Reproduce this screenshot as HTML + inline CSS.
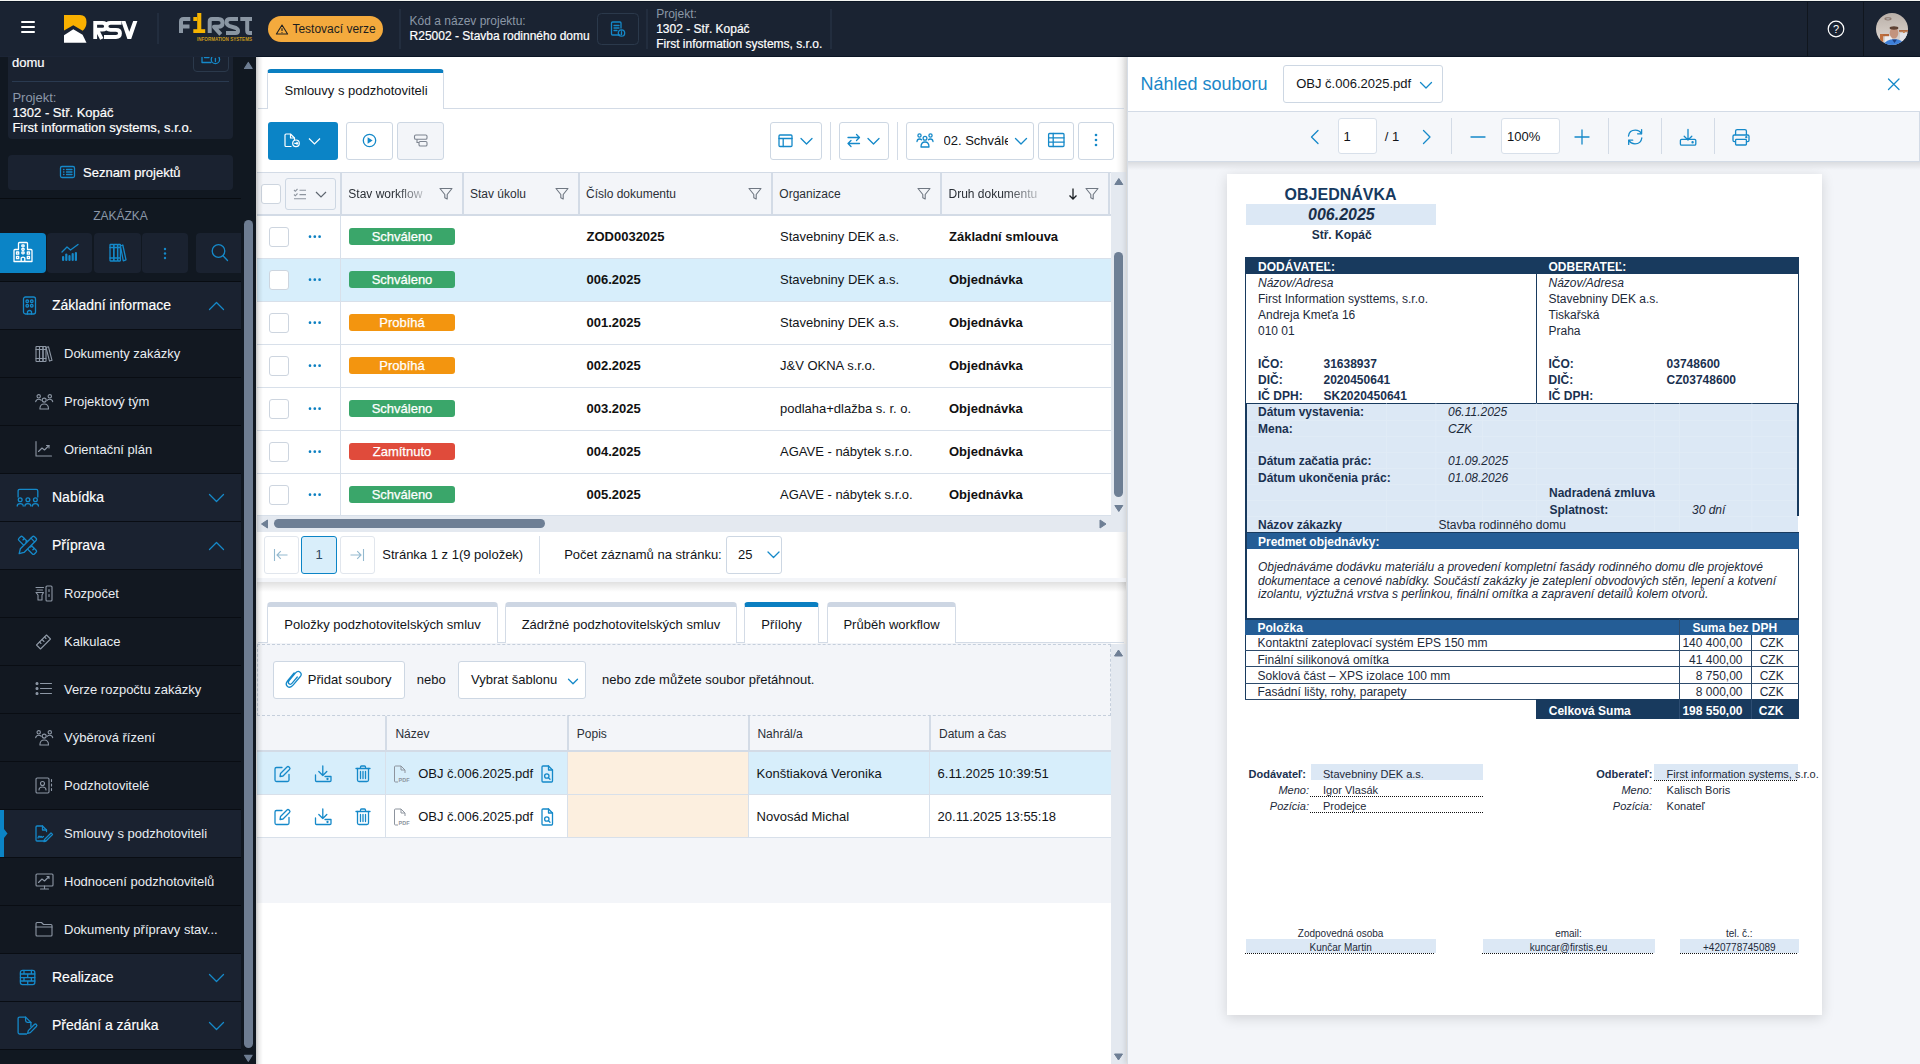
<!DOCTYPE html>
<html><head><meta charset="utf-8"><title>RSV</title>
<style>
*{box-sizing:border-box;margin:0;padding:0}
html,body{width:1920px;height:1064px;overflow:hidden;background:#fff;font-family:"Liberation Sans",sans-serif;color:#1b1f24}
.a{position:absolute}
svg{display:block;overflow:visible;position:absolute}
.t{position:absolute;white-space:nowrap;line-height:1}
#hdr{position:absolute;left:0;top:1px;width:1920px;height:55px;background:#1a2332}
.vsep{position:absolute;width:1px;background:#2b394b}
#sb{position:absolute;left:0;top:56px;width:256px;height:1008px;background:#111821;overflow:hidden}
.row{position:absolute;left:0;width:241px}
.sec{background:#1a2230}
.sub{background:#121821}
.rsep{position:absolute;left:0;width:241px;height:1px;background:#090d13}
.st{position:absolute;left:52px;color:#fff;font-size:14px;white-space:nowrap;line-height:1}
.subt{position:absolute;color:#e9edf2;font-size:13px;white-space:nowrap;line-height:1;left:64px}
.ic{stroke:#1589c9;fill:none;stroke-width:1.3;stroke-linecap:round;stroke-linejoin:round}
.icg{stroke:#8d97a5;fill:none;stroke-width:1.1;stroke-linecap:round;stroke-linejoin:round}
.btn{position:absolute;border:1px solid #cdd7e3;border-radius:3px;background:#fff}
.th{position:absolute;font-size:12px;color:#22272e;white-space:nowrap;line-height:1}
.cb{position:absolute;width:20px;height:20px;border:1px solid #cdd5df;border-radius:3px;background:#fff}
.badge{position:absolute;left:349px;width:106px;height:17px;border-radius:3px;color:#fff;font-size:13px;text-align:center;line-height:17px;-webkit-text-stroke:0.25px #fff}
.td{position:absolute;font-size:13px;color:#1b1f24;white-space:nowrap;line-height:1}
.b{font-weight:bold}
.pdf{position:absolute;color:#1b2a40;white-space:nowrap;line-height:1;font-size:12px}

</style></head><body>
<div class="a" style="left:0;top:0;width:1920px;height:1px;background:#f4f5f2"></div><div class="a" style="left:0;top:1px;width:1920px;height:1px;background:#0c1624;z-index:1"></div>
<div id="hdr"></div>
<div class="a" style="left:21px;top:21px;width:14px;height:2px;background:#fff;border-radius:1px"></div>
<div class="a" style="left:21px;top:26px;width:14px;height:2px;background:#fff;border-radius:1px"></div>
<div class="a" style="left:21px;top:31px;width:14px;height:2px;background:#fff;border-radius:1px"></div>
<svg style="left:0;top:0" width="1920" height="56">
  <path d="M64 15 H80 Q86.5 15 86.5 22 Q86.5 27.5 82.7 30.8 L73.3 25.2 L64 30.6 Z" fill="#f9b000"/>
  <path d="M64 35.2 L73.3 29.3 L82.6 34.7 L86.5 42.8 H64 Z" fill="#fff"/>
  <g stroke="#fff" stroke-width="3.8" fill="none" stroke-linejoin="miter">
    <path d="M95.2 39 V22.9 H102.5 Q106 22.9 106 26.3 Q106 29.7 102.5 29.7 H97 L101.8 39"/>
    <path d="M121.5 22.9 H110.5 Q106.5 22.9 106.5 26.3 Q106.5 29.8 110.5 29.8 H116 Q120 29.8 120 33.3 Q120 37 116 37 H104"/>
    
  </g>
  <path d="M121.2 21 H125.4 L129.3 31.8 L133.2 21 H137.4 L131.2 38.9 H127.4 Z" fill="#fff"/>
  <rect x="157.5" y="13" width="1" height="31" fill="#2b394b"/>
  <g stroke="#8a96a3" stroke-width="4" fill="none" stroke-linejoin="round">
    <path d="M181 33 V21.5 Q181 19 183.5 19 H190.3"/>
    <path d="M181 26.5 H189.5"/>
    <path d="M209.7 33 V21.5 Q209.7 19 212 19 H218.3 Q222.6 19 222.6 23 Q222.6 26.8 218.3 26.8 H214 L220.8 34.3"/>
    <path d="M238 19 H230.5 Q226.5 19 226.5 22.3 Q226.5 24.5 229 25.8 L236 28 Q238 29 238 31 Q238 33 235.5 33 H226"/>
    <path d="M240.3 19 H252 M247.2 19 V30.5 Q247.2 33 249.5 33 H252"/>
  </g>
  <g fill="#f5b301">
    <rect x="197.2" y="13" width="4.1" height="20"/>
    <rect x="193.3" y="17" width="3.9" height="4"/>
    <rect x="193.3" y="29.2" width="11.9" height="3.8"/>
  </g>
  <text x="197" y="41" font-family="Liberation Sans" font-weight="bold" font-size="5.2" fill="#c99a1c" textLength="55" lengthAdjust="spacingAndGlyphs">INFORMATION SYSTEMS</text>
  <rect x="268" y="16" width="115" height="26" rx="13" fill="#f4aa3d"/>
  <path d="M282 25 L287.6 34 H276.4 Z" stroke="#222" stroke-width="1.1" fill="none" stroke-linejoin="round"/>
  <path d="M282 28.2 V31" stroke="#222" stroke-width="1.1"/>
  <circle cx="282" cy="32.6" r="0.6" fill="#222"/>
  <rect x="399.5" y="9" width="1" height="40" fill="#2b394b"/>
  <rect x="597.5" y="13.5" width="41" height="31" rx="4" fill="none" stroke="#2b394b"/>
  <g class="ic" stroke-width="1.2">
    <path d="M620 35 H612.5 Q611.5 35 611.5 34 V23 Q611.5 22 612.5 22 H620 Q621 22 621 23 V28"/>
    <path d="M614 25.5 H619 M614 28 H619 M614 30.5 H617"/>
    <circle cx="621.5" cy="33" r="3.2"/>
    <path d="M621.5 32.3 V34.6 M621.5 31 V31.2"/>
  </g>
  <rect x="646.5" y="9" width="1" height="40" fill="#2b394b"/>
  <rect x="830.5" y="9" width="1" height="40" fill="#2b394b"/>
  <rect x="1807" y="1" width="1" height="55" fill="#10161e"/>
  <rect x="1863" y="1" width="1" height="55" fill="#10161e"/>
  <circle cx="1836" cy="29" r="7.8" fill="none" stroke="#fff" stroke-width="1.2"/>
  <text x="1836" y="33" font-family="Liberation Sans" font-size="11" fill="#fff" text-anchor="middle">?</text>
  <defs>
    <clipPath id="av"><circle cx="1892" cy="29" r="16"/></clipPath>
    <linearGradient id="avg" x1="0" y1="0" x2="0" y2="1"><stop offset="0" stop-color="#b8afa8"/><stop offset="0.5" stop-color="#cec5be"/><stop offset="1" stop-color="#dcd7d6"/></linearGradient>
  </defs>
  <g clip-path="url(#av)">
    <rect x="1876" y="13" width="32" height="32" fill="url(#avg)"/>
    <ellipse cx="1888" cy="18.8" rx="3.6" ry="1.7" fill="#8f7c72"/>
    <ellipse cx="1888" cy="18.8" rx="1.8" ry="1" fill="#a9a4a2"/>
    <rect x="1885" y="36" width="7" height="6" fill="#ecebee"/>
    <rect x="1880" y="34" width="9" height="2.2" fill="#b5673a"/>
    <rect x="1880" y="34" width="3.2" height="11" fill="#c0703f"/>
    <rect x="1899" y="30" width="10" height="1.8" fill="#b06a42"/>
    <rect x="1903" y="31" width="1.8" height="6" fill="#c88452"/>
    <rect x="1900" y="33" width="8" height="9" fill="#e3e1e6"/>
    <ellipse cx="1894" cy="33" rx="4.3" ry="5.6" fill="#c3937d"/>
    <ellipse cx="1894" cy="28" rx="4.4" ry="1.7" fill="#5e4234"/>
    <path d="M1883 46 Q1885 39.2 1894.5 39.2 Q1903 39.2 1906 46 Z" fill="#3d7fd8"/>
    <path d="M1892 39.5 L1894.5 43 L1897 39.5" fill="#1e3e80"/>
  </g>
</svg>
<div class="t" style="left:292.4px;top:22.6px;font-size:12px;color:#1d1d1d">Testovací verze</div>
<div class="t" style="left:409.6px;top:14.8px;font-size:12px;color:#8b97a6">Kód a název projektu:</div>
<div class="t" style="left:409.6px;top:29.8px;font-size:12px;color:#fff;-webkit-text-stroke:0.2px #fff">R25002 - Stavba rodinného domu</div>
<div class="t" style="left:656.2px;top:7.7px;font-size:12px;color:#8b97a6">Projekt:</div>
<div class="t" style="left:656.2px;top:22.8px;font-size:12px;color:#fff;-webkit-text-stroke:0.2px #fff">1302 - Stř. Kopáč</div>
<div class="t" style="left:656.2px;top:37.5px;font-size:12px;color:#fff;-webkit-text-stroke:0.2px #fff">First information systems, s.r.o.</div>
<div id="sb">
<div class="a" style="left:8px;top:-60px;width:225px;height:143px;background:#1a2230;border-radius:4px"></div>
<div class="t" style="left:12px;top:-0.2px;font-size:13px;color:#fff;-webkit-text-stroke:0.2px #fff">domu</div>
<div class="a" style="left:193px;top:-20px;width:36px;height:35.5px;border:1px solid #2b394b;border-radius:4px"></div>
<svg style="left:0;top:0" width="256" height="300"><g class="ic" stroke-width="1.3"><path d="M202 0 V6.5 H211"/><path d="M204.5 1.5 H209"/><circle cx="215.4" cy="3.4" r="4.2"/><path d="M215.4 2.5 V5.5"/></g></svg>
<div class="a" style="left:12px;top:25px;width:217px;height:1px;background:#2a3a50"></div>
<div class="t" style="left:12.4px;top:35px;font-size:13px;color:#8b97a8">Projekt:</div>
<div class="t" style="left:12.4px;top:50px;font-size:13px;color:#fff;-webkit-text-stroke:0.2px #fff">1302 - Stř. Kopáč</div>
<div class="t" style="left:12.4px;top:64.8px;font-size:13px;color:#fff;-webkit-text-stroke:0.2px #fff">First information systems, s.r.o.</div>
<div class="a" style="left:8px;top:99px;width:225px;height:35px;background:#1a2230;border-radius:4px"></div>
<svg style="left:0;top:0" width="256" height="300"><g class="ic" stroke-width="1.2"><rect x="60.5" y="110.5" width="14" height="11" rx="1.5"/><path d="M63.5 113.5 H64 M66.5 113.5 H72 M63.5 116 H64 M66.5 116 H72 M63.5 118.5 H64 M66.5 118.5 H72"/></g></svg>
<div class="t" style="left:83px;top:110px;font-size:13px;color:#fff;-webkit-text-stroke:0.2px #fff">Seznam projektů</div>
<div class="a" style="left:0;top:142px;width:241px;height:1px;background:#080c11"></div>
<div class="t" style="left:0;width:241px;text-align:center;top:153.8px;font-size:12px;color:#8b97a8">ZAKÁZKA</div>
<div class="a" style="left:0px;top:177px;width:46px;height:40px;background:#0b84c6;border-radius:0 4px 4px 0"></div>
<div class="a" style="left:47px;top:177px;width:45px;height:40px;background:#1a2230;border-radius:4px"></div>
<div class="a" style="left:94px;top:177px;width:47px;height:40px;background:#1a2230;border-radius:4px"></div>
<div class="a" style="left:142px;top:177px;width:46px;height:40px;background:#1a2230;border-radius:4px"></div>
<div class="a" style="left:196px;top:177px;width:45px;height:40px;background:#1a2230;border-radius:4px 0 0 4px"></div>
<svg style="left:0;top:0" width="256" height="300"><g stroke="#fff" stroke-width="1.3" fill="none" stroke-linejoin="round"><path d="M14 205.5 V194.5 Q14 193.5 15 193.5 H18.5 V187.5 Q18.5 186.5 19.5 186.5 H26.5 Q27.5 186.5 27.5 187.5 V193.5 H31 Q32 193.5 32 194.5 V205.5 Z"/><rect x="16.5" y="196" width="2.2" height="2.2"/><rect x="16.5" y="200.5" width="2.2" height="2.2"/><rect x="27.3" y="196" width="2.2" height="2.2"/><rect x="27.3" y="200.5" width="2.2" height="2.2"/><rect x="21.8" y="189" width="2.4" height="1.8" rx="0.8"/><rect x="21.8" y="192.5" width="2.4" height="1.8" rx="0.8"/><rect x="21.8" y="196" width="2.4" height="1.8" rx="0.8"/><path d="M21.2 205.5 V202 Q23 200.3 24.8 202 V205.5"/></g><g class="ic" stroke-width="1.3"><path d="M62 196 L67 191 L70.5 194 L78 188.5"/></g><g fill="#1589c9"><rect x="62" y="200" width="2.2" height="5" rx="1.1"/><rect x="65.2" y="197.5" width="2.2" height="7.5" rx="1.1"/><rect x="68.4" y="199" width="2.2" height="6" rx="1.1"/><rect x="71.6" y="197" width="2.2" height="8" rx="1.1"/><rect x="74.8" y="196" width="2.2" height="9" rx="1.1"/></g><g class="ic" stroke-width="1.2"><rect x="110" y="188.5" width="3.8" height="16.5" rx="0.5"/><rect x="113.8" y="188.5" width="3.8" height="16.5" rx="0.5"/><rect x="117.6" y="188.5" width="2.8" height="16.5" rx="0.5"/><path d="M120.4 190 L122.8 189 L126 203.8 L123.3 204.8 Z"/><path d="M110 191.5 H120.4 M110 202 H120.4"/></g><g fill="#1589c9"><circle cx="165" cy="193" r="1.2"/><circle cx="165" cy="197.5" r="1.2"/><circle cx="165" cy="202" r="1.2"/></g><g class="ic" stroke-width="1.4"><circle cx="218.5" cy="195" r="6.3"/><path d="M223 199.8 L227.5 204.5"/></g></svg>
<div class="a" style="left:0;top:225px;width:241px;height:1px;background:#080c11"></div>
<div class="row" style="top:226px;height:47px;background:#1a2230"></div>
<div class="rsep" style="top:273px"></div>
<div class="st" style="top:242.2px;-webkit-text-stroke:0.15px #fff">Základní informace</div>
<div class="row" style="top:274px;height:47px;background:#121821"></div>
<div class="rsep" style="top:321px"></div>
<div class="subt" style="top:291.3px">Dokumenty zakázky</div>
<div class="row" style="top:322px;height:47px;background:#121821"></div>
<div class="rsep" style="top:369px"></div>
<div class="subt" style="top:339.3px">Projektový tým</div>
<div class="row" style="top:370px;height:47px;background:#121821"></div>
<div class="rsep" style="top:417px"></div>
<div class="subt" style="top:387.3px">Orientační plán</div>
<div class="row" style="top:418px;height:47px;background:#1a2230"></div>
<div class="rsep" style="top:465px"></div>
<div class="st" style="top:434.2px;-webkit-text-stroke:0.15px #fff">Nabídka</div>
<div class="row" style="top:466px;height:47px;background:#1a2230"></div>
<div class="rsep" style="top:513px"></div>
<div class="st" style="top:482.2px;-webkit-text-stroke:0.15px #fff">Příprava</div>
<div class="row" style="top:514px;height:47px;background:#121821"></div>
<div class="rsep" style="top:561px"></div>
<div class="subt" style="top:531.3px">Rozpočet</div>
<div class="row" style="top:562px;height:47px;background:#121821"></div>
<div class="rsep" style="top:609px"></div>
<div class="subt" style="top:579.3px">Kalkulace</div>
<div class="row" style="top:610px;height:47px;background:#121821"></div>
<div class="rsep" style="top:657px"></div>
<div class="subt" style="top:627.3px">Verze rozpočtu zakázky</div>
<div class="row" style="top:658px;height:47px;background:#121821"></div>
<div class="rsep" style="top:705px"></div>
<div class="subt" style="top:675.3px">Výběrová řízení</div>
<div class="row" style="top:706px;height:47px;background:#121821"></div>
<div class="rsep" style="top:753px"></div>
<div class="subt" style="top:723.3px">Podzhotovitelé</div>
<div class="row" style="top:754px;height:47px;background:#1a2230"></div>
<div class="rsep" style="top:801px"></div>
<div class="subt" style="top:771.3px">Smlouvy s podzhotoviteli</div>
<div class="a" style="left:0;top:754px;width:4px;height:47px;background:#0b84c6"></div>
<div class="row" style="top:802px;height:47px;background:#121821"></div>
<div class="rsep" style="top:849px"></div>
<div class="subt" style="top:819.3px">Hodnocení podzhotovitelů</div>
<div class="row" style="top:850px;height:47px;background:#121821"></div>
<div class="rsep" style="top:897px"></div>
<div class="subt" style="top:867.3px">Dokumenty přípravy stav...</div>
<div class="row" style="top:898px;height:47px;background:#1a2230"></div>
<div class="rsep" style="top:945px"></div>
<div class="st" style="top:914.2px;-webkit-text-stroke:0.15px #fff">Realizace</div>
<div class="row" style="top:946px;height:47px;background:#1a2230"></div>
<div class="rsep" style="top:993px"></div>
<div class="st" style="top:962.2px;-webkit-text-stroke:0.15px #fff">Předání a záruka</div>
<svg style="left:0;top:0" width="256" height="1008"><g class="ic" transform="translate(22,241)"><rect x="1.5" y="0" width="12" height="17" rx="2"/><rect x="4" y="3" width="2.5" height="2.5" rx="1"/><rect x="8.5" y="3" width="2.5" height="2.5" rx="1"/><rect x="4" y="7.5" width="2.5" height="2.5" rx="1"/><rect x="8.5" y="7.5" width="2.5" height="2.5" rx="1"/><path d="M5.5 17 V14.5 Q7.5 12.5 9.5 14.5 V17"/></g><path class="ic" stroke-width="1.4" d="M209.5 253.5 L216.5 246.5 L223.5 253.5"/><g class="icg" transform="translate(35.5,289.5)"><rect x="0.5" y="1" width="3.5" height="15" rx="0.5"/><rect x="4" y="1" width="3.5" height="15" rx="0.5"/><rect x="7.5" y="1" width="3" height="15" rx="0.5"/><path d="M10.5 2 L13 1.3 L16.5 14.8 L14 15.6 Z"/><path d="M0.5 4 H10.5 M0.5 13 H10.5"/></g><g class="icg" transform="translate(35.5,337.5)"><circle cx="3.2" cy="2.8" r="1.7"/><circle cx="14.3" cy="2.8" r="1.7"/><circle cx="8.7" cy="6.6" r="2"/><path d="M0.2 8.2 Q0.8 5.8 3.2 5.8 Q5 5.8 5.6 6.8"/><path d="M17.2 8.2 Q16.6 5.8 14.3 5.8 Q12.5 5.8 11.8 6.8"/><path d="M4.4 15.5 Q4.4 10.5 8.7 10.5 Q13 10.5 13 15.5 Z"/></g><g class="icg" transform="translate(35.5,385.5)"><path d="M0.5 0 V14.5 H16"/><path d="M3 10 L6.5 6.5 L9 8.5 L13.5 4"/><path d="M11 4 H13.5 V6.5"/></g><g class="ic" transform="translate(22,433)"><path d="M-3.9 8 V2 Q-3.9 0.4 -2.3 0.4 H14.2 Q15.8 0.4 15.8 2 V8"/><circle cx="-1.8" cy="10.8" r="1.9"/><circle cx="5.9" cy="10.8" r="1.9"/><circle cx="13.4" cy="10.8" r="1.9"/><path d="M-4.8 17 Q-4.8 14.6 -1.8 14.6 Q1.2 14.6 1.2 17 M2.9 17 Q2.9 14.6 5.9 14.6 Q8.9 14.6 8.9 17 M10.4 17 Q10.4 14.6 13.4 14.6 Q16.4 14.6 16.4 17"/></g><path class="ic" stroke-width="1.4" d="M209.5 438.5 L216.5 445.5 L223.5 438.5"/><g class="ic" transform="translate(22,481)"><g transform="translate(5.5 8.3) rotate(45)"><rect x="-11" y="-2.6" width="22" height="5.2" rx="1.4"/><path d="M-7 -2.6 V-0.6 M-3.5 -2.6 V-1 M3.5 -2.6 V-1 M7 -2.6 V-0.6"/></g><g transform="translate(5.5 8.3) rotate(-45)"><path fill="#1a2230" d="M-7.5 -2.6 H9.5 Q11 -2.6 11 -1.1 V1.1 Q11 2.6 9.5 2.6 H-7.5 L-11.8 0 Z"/><path d="M7.5 -2.6 V2.6"/></g></g><path class="ic" stroke-width="1.4" d="M209.5 493.5 L216.5 486.5 L223.5 493.5"/><g class="icg" transform="translate(35.5,529.5)"><path d="M0.5 2 H8 M1.5 4.5 H7 M0.5 7 H8 L6.5 9.5 V14.5 H2.5 V9.5 Z"/><rect x="10.5" y="0.5" width="6" height="15" rx="1"/><path d="M13.5 4 V6 M13.5 9 V11"/></g><g class="icg" transform="translate(35.5,577.5)"><path d="M1 11.5 L11 1.5 L15 5.5 L5 15.5 Z"/><path d="M4 8.5 L5.5 10 M6.5 6 L8.5 8 M9 3.5 L10.5 5"/></g><g class="icg" transform="translate(35.5,625.5)"><circle cx="1.5" cy="2" r="1" fill="#8d97a5"/><circle cx="1.5" cy="7" r="1" fill="#8d97a5"/><circle cx="1.5" cy="12" r="1" fill="#8d97a5"/><path d="M5 2 H16 M5 7 H16 M5 12 H16"/></g><g class="icg" transform="translate(35.5,673.5)"><circle cx="3.2" cy="2.8" r="1.7"/><circle cx="14.3" cy="2.8" r="1.7"/><circle cx="8.7" cy="6.6" r="2"/><path d="M0.2 8.2 Q0.8 5.8 3.2 5.8 Q5 5.8 5.6 6.8"/><path d="M17.2 8.2 Q16.6 5.8 14.3 5.8 Q12.5 5.8 11.8 6.8"/><path d="M4.4 15.5 Q4.4 10.5 8.7 10.5 Q13 10.5 13 15.5 Z"/></g><g class="icg" transform="translate(35.5,721.5)"><rect x="0.5" y="0.5" width="13" height="15" rx="1.2"/><circle cx="7" cy="6" r="2"/><path d="M3.5 12.5 Q3.5 9.5 7 9.5 Q10.5 9.5 10.5 12.5"/><path d="M16 2 V4 M16 6.5 V8.5 M16 11 V13"/></g><g class="ic" transform="translate(35.5,769.5)"><path d="M10 15.5 H1.5 Q0.5 15.5 0.5 14.5 V1.5 Q0.5 0.5 1.5 0.5 H7 L11 4.5 V6"/><path d="M7 0.5 V4.5 H11"/><path d="M2.5 12.5 Q3.5 9 4.5 12 Q5.5 10 6.5 12 L8 11"/><path d="M9 14 L15.5 7.5 L17 9 L10.5 15.5 L8.5 16 Z"/></g><path d="M4 773 L7.5 777.5 L4 782 Z" fill="#0b84c6"/><g class="icg" transform="translate(35.5,817.5)"><rect x="0.5" y="0.5" width="17" height="12" rx="1"/><path d="M3 9 L6.5 5.5 L9 7.5 L13.5 3 M11.5 3 H13.5 V5"/><path d="M9 12.5 V15 M5 15.5 H13"/></g><g class="icg" transform="translate(35.5,865.5)"><path d="M0.5 13.5 V2 Q0.5 1 1.5 1 H6 L8 3 H15.5 Q16.5 3 16.5 4 V13.5 Q16.5 14.5 15.5 14.5 H1.5 Q0.5 14.5 0.5 13.5 Z"/><path d="M0.5 5.5 H16.5"/></g><g class="ic" transform="translate(22,913)"><rect x="-1.6" y="1.4" width="14.4" height="14.2" rx="2"/><path d="M-1.6 5 H12.8 M-1.6 8.6 H12.8 M-1.6 12 H12.8 M2 1.4 V5 M9.4 1.4 V5 M5.7 5 V8.6 M2 8.6 V12 M9.4 8.6 V12 M5.7 12 V15.6"/></g><path class="ic" stroke-width="1.4" d="M209.5 918.5 L216.5 925.5 L223.5 918.5"/><g class="ic" transform="translate(22,961)"><path d="M4.5 17 H-2.4 Q-3.9 17 -3.9 15.5 V1.6 Q-3.9 0.1 -2.4 0.1 H3.6 L8.9 5.4 V9.5"/><path d="M3.6 0.1 V3.6 Q3.6 5.4 5.4 5.4 H8.9"/><path d="M5.6 16.3 L6.3 13.6 L12.4 7.5 Q13.4 6.5 14.4 7.5 Q15.4 8.5 14.4 9.5 L8.3 15.6 Z"/></g><path class="ic" stroke-width="1.4" d="M209.5 966.5 L216.5 973.5 L223.5 966.5"/></svg>
<div class="a" style="left:243.5px;top:164px;width:9.5px;height:827.5px;background:#6e7d92;border-radius:5px"></div>
<svg style="left:0;top:0" width="256" height="1008"><path d="M244.5 12.5 L248.3 6.5 L252.1 12.5 Z" fill="#6e7d92" stroke="#6e7d92" stroke-width="1.2" stroke-linejoin="round"/><path d="M244.5 999.3 L248.3 1005.3 L252.1 999.3 Z" fill="#6e7d92" stroke="#6e7d92" stroke-width="1.2" stroke-linejoin="round"/></svg>
</div><div class="a" style="left:1116px;top:56px;width:11px;height:1008px;background:linear-gradient(90deg,rgba(0,0,0,0),rgba(0,0,0,0.09))"></div>
<div class="a" style="left:258px;top:108px;width:866px;height:1px;background:#d3dbe6"></div>
<div class="a" style="left:267px;top:69px;width:177px;height:40px;background:#fff;border:1px solid #d3dbe6;border-bottom:none;border-top:4px solid #0b7fc1;border-radius:4px 4px 0 0"></div>
<div class="t" style="left:284.5px;top:83.80px;font-size:13px;color:#111418;">Smlouvy s podzhotoviteli</div>
<div class="a" style="left:268px;top:122px;width:70px;height:38px;background:#0b84c6;border-radius:3px"></div>
<div class="btn" style="left:346px;top:122px;width:47px;height:38px"></div>
<div class="btn" style="left:397px;top:122px;width:47px;height:38px;background:#f3f5f9"></div>
<div class="btn" style="left:770px;top:122px;width:52px;height:38px"></div>
<div class="a" style="left:830px;top:122px;width:1px;height:38px;background:#d3dbe6"></div>
<div class="btn" style="left:839px;top:122px;width:50px;height:38px"></div>
<div class="a" style="left:897px;top:122px;width:1px;height:38px;background:#d3dbe6"></div>
<div class="btn" style="left:906px;top:122px;width:128px;height:38px"></div>
<div class="t" style="left:943.5px;top:133.8px;font-size:13px;color:#111418;width:64px;overflow:hidden">02. Schválené</div>
<div class="btn" style="left:1038px;top:122px;width:36px;height:38px"></div>
<div class="btn" style="left:1078px;top:122px;width:36px;height:38px"></div>
<div class="a" style="left:257px;top:172px;width:854px;height:44px;background:#f3f5f9;border-top:1px solid #d3dbe6;border-bottom:2px solid #d3dbe6"></div>
<div class="a" style="left:340px;top:173px;width:2px;height:41px;background:#d3dbe6"></div>
<div class="a" style="left:462px;top:173px;width:2px;height:41px;background:#d3dbe6"></div>
<div class="a" style="left:578px;top:173px;width:2px;height:41px;background:#d3dbe6"></div>
<div class="a" style="left:771px;top:173px;width:2px;height:41px;background:#d3dbe6"></div>
<div class="a" style="left:940px;top:173px;width:2px;height:41px;background:#d3dbe6"></div>
<div class="a" style="left:1108px;top:173px;width:2px;height:41px;background:#d3dbe6"></div>
<div class="cb" style="left:261px;top:184px;width:20px;height:20px"></div>
<div class="btn" style="left:285px;top:178px;width:51px;height:32px;background:#f3f5f9"></div>
<div class="t" style="left:348.3px;top:187.9px;font-size:12px;color:#2a2f36;width:76px;overflow:hidden;-webkit-mask-image:linear-gradient(90deg,#000 62%,rgba(0,0,0,0.25))">Stav workflow</div>
<div class="t" style="left:470px;top:187.94px;font-size:12px;color:#2a2f36;">Stav úkolu</div>
<div class="t" style="left:586px;top:187.94px;font-size:12px;color:#2a2f36;">Číslo dokumentu</div>
<div class="t" style="left:779.3px;top:187.94px;font-size:12px;color:#2a2f36;">Organizace</div>
<div class="t" style="left:948.5px;top:187.9px;font-size:12px;color:#2a2f36;width:90px;overflow:hidden;-webkit-mask-image:linear-gradient(90deg,#000 62%,rgba(0,0,0,0.25))">Druh dokumentu</div>
<div class="a" style="left:257px;top:216px;width:854px;height:43px;background:#fff;border-bottom:1px solid #d8e0ea"></div>
<div class="cb" style="left:269px;top:227px;width:20px;height:20px"></div>
<div class="badge" style="top:228px;background:#3aa66a">Schváleno</div>
<div class="t" style="left:586.5px;top:230.00px;font-size:13px;color:#111;;font-weight:bold">ZOD0032025</div>
<div class="t" style="left:780px;top:230.00px;font-size:13px;color:#111418;">Stavebniny DEK a.s.</div>
<div class="t" style="left:949px;top:230.00px;font-size:13px;color:#111;;font-weight:bold">Základní smlouva</div>
<div class="a" style="left:257px;top:259px;width:854px;height:43px;background:#d7eefb;border-bottom:1px solid #d8e0ea"></div>
<div class="cb" style="left:269px;top:270px;width:20px;height:20px"></div>
<div class="badge" style="top:271px;background:#3aa66a">Schváleno</div>
<div class="t" style="left:586.5px;top:273.00px;font-size:13px;color:#111;;font-weight:bold">006.2025</div>
<div class="t" style="left:780px;top:273.00px;font-size:13px;color:#111418;">Stavebniny DEK a.s.</div>
<div class="t" style="left:949px;top:273.00px;font-size:13px;color:#111;;font-weight:bold">Objednávka</div>
<div class="a" style="left:257px;top:302px;width:854px;height:43px;background:#fff;border-bottom:1px solid #d8e0ea"></div>
<div class="cb" style="left:269px;top:313px;width:20px;height:20px"></div>
<div class="badge" style="top:314px;background:#f3950f">Probíhá</div>
<div class="t" style="left:586.5px;top:316.00px;font-size:13px;color:#111;;font-weight:bold">001.2025</div>
<div class="t" style="left:780px;top:316.00px;font-size:13px;color:#111418;">Stavebniny DEK a.s.</div>
<div class="t" style="left:949px;top:316.00px;font-size:13px;color:#111;;font-weight:bold">Objednávka</div>
<div class="a" style="left:257px;top:345px;width:854px;height:43px;background:#fff;border-bottom:1px solid #d8e0ea"></div>
<div class="cb" style="left:269px;top:356px;width:20px;height:20px"></div>
<div class="badge" style="top:357px;background:#f3950f">Probíhá</div>
<div class="t" style="left:586.5px;top:359.00px;font-size:13px;color:#111;;font-weight:bold">002.2025</div>
<div class="t" style="left:780px;top:359.00px;font-size:13px;color:#111418;">J&amp;V OKNA s.r.o.</div>
<div class="t" style="left:949px;top:359.00px;font-size:13px;color:#111;;font-weight:bold">Objednávka</div>
<div class="a" style="left:257px;top:388px;width:854px;height:43px;background:#fff;border-bottom:1px solid #d8e0ea"></div>
<div class="cb" style="left:269px;top:399px;width:20px;height:20px"></div>
<div class="badge" style="top:400px;background:#3aa66a">Schváleno</div>
<div class="t" style="left:586.5px;top:402.00px;font-size:13px;color:#111;;font-weight:bold">003.2025</div>
<div class="t" style="left:780px;top:402.00px;font-size:13px;color:#111418;">podlaha+dlažba s. r. o.</div>
<div class="t" style="left:949px;top:402.00px;font-size:13px;color:#111;;font-weight:bold">Objednávka</div>
<div class="a" style="left:257px;top:431px;width:854px;height:43px;background:#fff;border-bottom:1px solid #d8e0ea"></div>
<div class="cb" style="left:269px;top:442px;width:20px;height:20px"></div>
<div class="badge" style="top:443px;background:#e04b3b">Zamítnuto</div>
<div class="t" style="left:586.5px;top:445.00px;font-size:13px;color:#111;;font-weight:bold">004.2025</div>
<div class="t" style="left:780px;top:445.00px;font-size:13px;color:#111418;">AGAVE - nábytek s.r.o.</div>
<div class="t" style="left:949px;top:445.00px;font-size:13px;color:#111;;font-weight:bold">Objednávka</div>
<div class="a" style="left:257px;top:474px;width:854px;height:42px;background:#fff;border-bottom:1px solid #d8e0ea"></div>
<div class="cb" style="left:269px;top:485px;width:20px;height:20px"></div>
<div class="badge" style="top:486px;background:#3aa66a">Schváleno</div>
<div class="t" style="left:586.5px;top:488.00px;font-size:13px;color:#111;;font-weight:bold">005.2025</div>
<div class="t" style="left:780px;top:488.00px;font-size:13px;color:#111418;">AGAVE - nábytek s.r.o.</div>
<div class="t" style="left:949px;top:488.00px;font-size:13px;color:#111;;font-weight:bold">Objednávka</div>
<div class="a" style="left:340px;top:216px;width:1px;height:300px;background:#d8e0ea"></div>
<div class="a" style="left:1111px;top:172px;width:15px;height:360px;background:#e4e9f0"></div>
<div class="a" style="left:257px;top:516px;width:854px;height:16px;background:#e4e9f0"></div>
<div class="a" style="left:1114px;top:252px;width:8.5px;height:244.5px;background:#6e7f95;border-radius:4.5px"></div>
<div class="a" style="left:274px;top:519px;width:271px;height:9px;background:#6e7f95;border-radius:4.5px"></div>
<div class="btn" style="left:263.5px;top:536px;width:35px;height:38px;border-color:#e1e6ed"></div>
<div class="btn" style="left:301px;top:536px;width:36px;height:38px;background:#d9eefa;border-color:#0b84c6"></div>
<div class="t" style="left:315.5px;top:548.00px;font-size:13px;color:#2d4a63;">1</div>
<div class="btn" style="left:339.5px;top:536px;width:35px;height:38px;border-color:#e1e6ed"></div>
<div class="t" style="left:382.3px;top:548.00px;font-size:13px;color:#111418;">Stránka 1 z 1(9 položek)</div>
<div class="a" style="left:539px;top:536px;width:1px;height:38px;background:#d8e0ea"></div>
<div class="t" style="left:564.2px;top:548.00px;font-size:13px;color:#111418;">Počet záznamů na stránku:</div>
<div class="btn" style="left:726px;top:536px;width:56px;height:38px"></div>
<div class="t" style="left:738px;top:548.00px;font-size:13px;color:#111418;">25</div>
<div class="a" style="left:257px;top:578px;width:869px;height:4px;background:#f3f5f9"></div>
<div class="a" style="left:257px;top:582px;width:869px;height:10px;background:linear-gradient(180deg,rgba(0,0,0,0.12),rgba(0,0,0,0))"></div>
<div class="a" style="left:258px;top:642px;width:866px;height:1px;background:#d3dbe6"></div>
<div class="a" style="left:267px;top:602px;width:231px;height:41px;background:#fff;border:1px solid #d3dbe6;border-bottom:none;border-top:5px solid #cdd6e3;border-radius:4px 4px 0 0"></div>
<div class="t" style="left:267px;width:231px;text-align:center;top:618.40px;font-size:13px;color:#111418">Položky podzhotovitelských smluv</div>
<div class="a" style="left:505px;top:602px;width:232px;height:41px;background:#fff;border:1px solid #d3dbe6;border-bottom:none;border-top:5px solid #cdd6e3;border-radius:4px 4px 0 0"></div>
<div class="t" style="left:505px;width:232px;text-align:center;top:618.40px;font-size:13px;color:#111418">Zádržné podzhotovitelských smluv</div>
<div class="a" style="left:744px;top:602px;width:75px;height:41px;background:#fff;border:1px solid #d3dbe6;border-bottom:none;border-top:5px solid #0b7fc1;border-radius:4px 4px 0 0"></div>
<div class="t" style="left:744px;width:75px;text-align:center;top:618.40px;font-size:13px;color:#111418">Přílohy</div>
<div class="a" style="left:827px;top:602px;width:129px;height:41px;background:#fff;border:1px solid #d3dbe6;border-bottom:none;border-top:5px solid #cdd6e3;border-radius:4px 4px 0 0"></div>
<div class="t" style="left:827px;width:129px;text-align:center;top:618.40px;font-size:13px;color:#111418">Průběh workflow</div>
<div class="a" style="left:257px;top:643px;width:854px;height:260px;background:#f3f5f9"></div>
<div class="a" style="left:257px;top:644px;width:854px;height:72px;border:1px dashed #c5cfdc;border-bottom:1px dashed #c5cfdc"></div>
<div class="btn" style="left:273px;top:661px;width:132px;height:38px"></div>
<div class="t" style="left:307.8px;top:673.00px;font-size:13px;color:#111418;">Přidat soubory</div>
<div class="t" style="left:416.7px;top:673.00px;font-size:13px;color:#111418;">nebo</div>
<div class="btn" style="left:458px;top:661px;width:128px;height:38px"></div>
<div class="t" style="left:471px;top:673.00px;font-size:13px;color:#111418;">Vybrat šablonu</div>
<div class="t" style="left:602px;top:673.00px;font-size:13px;color:#111418;">nebo zde můžete soubor přetáhnout.</div>
<div class="a" style="left:257px;top:716px;width:854px;height:36px;background:#f3f5f9;border-bottom:2px solid #d3dbe6"></div>
<div class="a" style="left:385px;top:716px;width:2px;height:34px;background:#d3dbe6"></div>
<div class="a" style="left:567px;top:716px;width:2px;height:34px;background:#d3dbe6"></div>
<div class="a" style="left:748px;top:716px;width:2px;height:34px;background:#d3dbe6"></div>
<div class="a" style="left:929px;top:716px;width:2px;height:34px;background:#d3dbe6"></div>
<div class="t" style="left:395.4px;top:727.64px;font-size:12px;color:#2a2f36;">Název</div>
<div class="t" style="left:576.8px;top:727.64px;font-size:12px;color:#2a2f36;">Popis</div>
<div class="t" style="left:757.4px;top:727.64px;font-size:12px;color:#2a2f36;">Nahrál/a</div>
<div class="t" style="left:939px;top:727.64px;font-size:12px;color:#2a2f36;">Datum a čas</div>
<div class="a" style="left:257px;top:752px;width:854px;height:43px;background:#d7eefb;border-bottom:1px solid #d8e0ea"></div>
<div class="a" style="left:568px;top:752px;width:180px;height:42px;background:#fcefdf"></div>
<div class="a" style="left:385px;top:752px;width:1px;height:43px;background:#d8e0ea"></div>
<div class="a" style="left:567px;top:752px;width:1px;height:43px;background:#d8e0ea"></div>
<div class="a" style="left:748px;top:752px;width:1px;height:43px;background:#d8e0ea"></div>
<div class="a" style="left:929px;top:752px;width:1px;height:43px;background:#d8e0ea"></div>
<div class="t" style="left:418.2px;top:767.10px;font-size:13px;color:#111418;">OBJ č.006.2025.pdf</div>
<div class="t" style="left:756.6px;top:767.10px;font-size:13px;color:#111418;">Konštiaková Veronika</div>
<div class="t" style="left:937.6px;top:767.10px;font-size:13px;color:#111418;">6.11.2025 10:39:51</div>
<div class="a" style="left:257px;top:795px;width:854px;height:43px;background:#fff;border-bottom:1px solid #d8e0ea"></div>
<div class="a" style="left:568px;top:795px;width:180px;height:42px;background:#fcefdf"></div>
<div class="a" style="left:385px;top:795px;width:1px;height:43px;background:#d8e0ea"></div>
<div class="a" style="left:567px;top:795px;width:1px;height:43px;background:#d8e0ea"></div>
<div class="a" style="left:748px;top:795px;width:1px;height:43px;background:#d8e0ea"></div>
<div class="a" style="left:929px;top:795px;width:1px;height:43px;background:#d8e0ea"></div>
<div class="t" style="left:418.2px;top:810.10px;font-size:13px;color:#111418;">OBJ č.006.2025.pdf</div>
<div class="t" style="left:756.6px;top:810.10px;font-size:13px;color:#111418;">Novosád Michal</div>
<div class="t" style="left:937.6px;top:810.10px;font-size:13px;color:#111418;">20.11.2025 13:55:18</div>
<div class="a" style="left:1111px;top:644px;width:15px;height:420px;background:#e4e9f0"></div>
<svg style="left:0;top:0" width="1920" height="1064"><g stroke="#fff" stroke-width="1.2" fill="none" stroke-linejoin="round"><path d="M291.5 146.5 H286 Q285 146.5 285 145.5 V135 Q285 134 286 134 H290.5 L294.5 138 V140"/><path d="M290.5 134 V138 H294.5"/><circle cx="296" cy="143.3" r="3.3"/><path d="M294.3 143.3 H297.7 M296.6 142 L297.8 143.3 L296.6 144.6"/></g><path d="M309 138.5 L314.5 144 L320 138.5" stroke="#fff" stroke-width="1.2" fill="none"/><g class="ic" stroke-width="1.4"><circle cx="369.5" cy="140.5" r="6.2"/></g><path d="M367.6 137.2 L372.6 140.5 L367.6 143.8 Z" fill="#1589c9"/><g stroke="#7d8490" stroke-width="1.1" fill="none"><rect x="414.5" y="135" width="12.5" height="4.3" rx="1.3"/><path d="M417 139.3 V142.5 H419"/><rect x="419" y="141.5" width="8" height="4.5" rx="1.3"/></g><g class="ic" stroke-width="1.2"><rect x="779" y="135" width="13" height="11.5" rx="1"/><path d="M779 138.5 H792 M783.2 138.5 V146.5"/></g><path d="M801 138.5 L806.5 144 L812 138.5" class="ic" stroke-width="1.2"/><g class="ic" stroke-width="1.2"><path d="M848 137.5 H859.5 M856.5 134.5 L859.5 137.5 L856.5 140.5 M859.5 143.5 H848 M851 140.5 L848 143.5 L851 146.5"/></g><path d="M868 138.5 L873.5 144 L879 138.5" class="ic" stroke-width="1.2"/><g class="ic" stroke-width="1.1"><circle cx="919.5" cy="135.5" r="1.6"/><circle cx="930.5" cy="135.5" r="1.6"/><circle cx="925" cy="138.3" r="1.9"/><path d="M917 141.5 Q917.3 139 919.5 139 Q921 139 921.6 139.8 M933 141.5 Q932.7 139 930.5 139 Q929 139 928.4 139.8 M921 147 Q921 142 925 142 Q929 142 929 147 Z"/></g><path d="M1015.5 138.5 L1021 144 L1026.5 138.5" class="ic" stroke-width="1.2"/><g class="ic" stroke-width="1.2"><rect x="1048.6" y="133.5" width="15.4" height="13" rx="1"/><path d="M1048.6 137.8 H1064 M1048.6 142.1 H1064 M1053.2 133.5 V146.5"/></g><g fill="#1589c9"><circle cx="1096" cy="135" r="1.3"/><circle cx="1096" cy="140" r="1.3"/><circle cx="1096" cy="145" r="1.3"/></g><g stroke="#8d949e" stroke-width="1.1" fill="none"><path d="M294 190 L295.3 191.3 L297.5 189 M294 194.5 L295.3 195.8 L297.5 193.5 M299.5 190.2 H306 M299.5 194.6 H306 M294 198.7 H306"/></g><path d="M316 192 L321 197 L326 192" stroke="#5e6670" stroke-width="1.2" fill="none"/><path d="M440 188.5 H452 L447.2 194.5 V199 L444.8 197.8 V194.5 Z" stroke="#6f7782" stroke-width="1.1" fill="none" stroke-linejoin="round"/><path d="M556 188.5 H568 L563.2 194.5 V199 L560.8 197.8 V194.5 Z" stroke="#6f7782" stroke-width="1.1" fill="none" stroke-linejoin="round"/><path d="M749 188.5 H761 L756.2 194.5 V199 L753.8 197.8 V194.5 Z" stroke="#6f7782" stroke-width="1.1" fill="none" stroke-linejoin="round"/><path d="M918 188.5 H930 L925.2 194.5 V199 L922.8 197.8 V194.5 Z" stroke="#6f7782" stroke-width="1.1" fill="none" stroke-linejoin="round"/><path d="M1073 188.5 V199 M1069.5 195.5 L1073 199 L1076.5 195.5" stroke="#1b1f24" stroke-width="1.3" fill="none"/><path d="M1086 188.5 H1098 L1093.2 194.5 V199 L1090.8 197.8 V194.5 Z" stroke="#6f7782" stroke-width="1.1" fill="none" stroke-linejoin="round"/><g fill="#0b7fc1"><circle cx="310" cy="236.7" r="1.35"/><circle cx="314.8" cy="236.7" r="1.35"/><circle cx="319.6" cy="236.7" r="1.35"/></g><g fill="#0b7fc1"><circle cx="310" cy="279.7" r="1.35"/><circle cx="314.8" cy="279.7" r="1.35"/><circle cx="319.6" cy="279.7" r="1.35"/></g><g fill="#0b7fc1"><circle cx="310" cy="322.7" r="1.35"/><circle cx="314.8" cy="322.7" r="1.35"/><circle cx="319.6" cy="322.7" r="1.35"/></g><g fill="#0b7fc1"><circle cx="310" cy="365.7" r="1.35"/><circle cx="314.8" cy="365.7" r="1.35"/><circle cx="319.6" cy="365.7" r="1.35"/></g><g fill="#0b7fc1"><circle cx="310" cy="408.7" r="1.35"/><circle cx="314.8" cy="408.7" r="1.35"/><circle cx="319.6" cy="408.7" r="1.35"/></g><g fill="#0b7fc1"><circle cx="310" cy="451.7" r="1.35"/><circle cx="314.8" cy="451.7" r="1.35"/><circle cx="319.6" cy="451.7" r="1.35"/></g><g fill="#0b7fc1"><circle cx="310" cy="494.7" r="1.35"/><circle cx="314.8" cy="494.7" r="1.35"/><circle cx="319.6" cy="494.7" r="1.35"/></g><path d="M1114.8 184.5 L1118.8 178.5 L1122.8 184.5 Z" fill="#6e7f95" stroke="#6e7f95" stroke-width="1" stroke-linejoin="round"/><path d="M1114.8 505.5 L1118.8 511.5 L1122.8 505.5 Z" fill="#6e7f95" stroke="#6e7f95" stroke-width="1" stroke-linejoin="round"/><path d="M267.5 520 L261.5 524 L267.5 528 Z" fill="#6e7f95" stroke="#6e7f95" stroke-width="1" stroke-linejoin="round"/><path d="M1100 520 L1106 524 L1100 528 Z" fill="#6e7f95" stroke="#6e7f95" stroke-width="1" stroke-linejoin="round"/><g stroke="#93b9cf" stroke-width="1.1" fill="none"><path d="M274.5 549 V561 M277 555 H287.5 M280.8 551.2 L277 555 L280.8 558.8"/></g><g stroke="#93b9cf" stroke-width="1.1" fill="none"><path d="M363.5 549 V561 M350.5 555 H361 M357.2 551.2 L361 555 L357.2 558.8"/></g><path d="M768 552 L773.5 557.5 L779 552" class="ic" stroke-width="1.2"/><g transform="translate(293.2 678.8) rotate(40)"><path class="ic" stroke-width="1.3" d="M-3 -5 V5 Q-3 9.5 0.5 9.5 Q4 9.5 4 5 V-6 Q4 -9.5 1 -9.5 Q-2 -9.5 -2 -6 V4 Q-2 6.5 0 6.5 Q2 6.5 2 4 V-4"/></g><path d="M568.5 679.3 L573 683.8 L577.5 679.3" class="ic" stroke-width="1.2"/><g class="ic" stroke-width="1.3"><path d="M282 767.5 H276.5 Q275 767.5 275 769 V780 Q275 781.5 276.5 781.5 H287.5 Q289 781.5 289 780 V774.5"/><path d="M280 776.5 L280.5 773.5 L287 767 Q288 766 289 767 L289.5 767.5 Q290.5 768.5 289.5 769.5 L283 776 Z"/></g><g class="ic" stroke-width="1.3"><path d="M322.8 766 V775.5 M318.8 771.5 L322.8 775.5 L326.8 771.5"/><path d="M315.5 775 V780.5 Q315.5 781.5 316.5 781.5 H330 Q331 781.5 331 780.5 V776.5 H325"/><circle cx="327.5" cy="779" r="0.5" fill="#1589c9"/></g><g class="ic" stroke-width="1.3"><path d="M356 768.5 H370 M360.5 768.5 V767 Q360.5 766 361.5 766 H364.5 Q365.5 766 365.5 767 V768.5"/><path d="M357.5 768.5 V780 Q357.5 781.5 359 781.5 H367 Q368.5 781.5 368.5 780 V768.5"/><path d="M360.5 771.5 V778.5 M363 771.5 V778.5 M365.5 771.5 V778.5"/></g><g stroke="#8d949e" stroke-width="1" fill="none"><path d="M398 782 H395.5 Q394.5 782 394.5 781 V767 Q394.5 766 395.5 766 H401 L405 770 V773"/><path d="M401 766 V770 H405"/></g><text x="398.5" y="782" font-family="Liberation Sans" font-weight="bold" font-size="5.5" fill="#8d949e">PDF</text><g class="ic" stroke-width="1.2"><path d="M551 782 H543 Q542 782 542 781 V767 Q542 766 543 766 H548.5 L552.5 770 V781 Q552.5 782 551.5 782"/><path d="M548.5 766 V770 H552.5"/><circle cx="546.8" cy="776" r="2.2"/><path d="M548.4 777.6 L550 779.2"/></g><g class="ic" stroke-width="1.3"><path d="M282 810.5 H276.5 Q275 810.5 275 812 V823 Q275 824.5 276.5 824.5 H287.5 Q289 824.5 289 823 V817.5"/><path d="M280 819.5 L280.5 816.5 L287 810 Q288 809 289 810 L289.5 810.5 Q290.5 811.5 289.5 812.5 L283 819 Z"/></g><g class="ic" stroke-width="1.3"><path d="M322.8 809 V818.5 M318.8 814.5 L322.8 818.5 L326.8 814.5"/><path d="M315.5 818 V823.5 Q315.5 824.5 316.5 824.5 H330 Q331 824.5 331 823.5 V819.5 H325"/><circle cx="327.5" cy="822" r="0.5" fill="#1589c9"/></g><g class="ic" stroke-width="1.3"><path d="M356 811.5 H370 M360.5 811.5 V810 Q360.5 809 361.5 809 H364.5 Q365.5 809 365.5 810 V811.5"/><path d="M357.5 811.5 V823 Q357.5 824.5 359 824.5 H367 Q368.5 824.5 368.5 823 V811.5"/><path d="M360.5 814.5 V821.5 M363 814.5 V821.5 M365.5 814.5 V821.5"/></g><g stroke="#8d949e" stroke-width="1" fill="none"><path d="M398 825 H395.5 Q394.5 825 394.5 824 V810 Q394.5 809 395.5 809 H401 L405 813 V816"/><path d="M401 809 V813 H405"/></g><text x="398.5" y="825" font-family="Liberation Sans" font-weight="bold" font-size="5.5" fill="#8d949e">PDF</text><g class="ic" stroke-width="1.2"><path d="M551 825 H543 Q542 825 542 824 V810 Q542 809 543 809 H548.5 L552.5 813 V824 Q552.5 825 551.5 825"/><path d="M548.5 809 V813 H552.5"/><circle cx="546.8" cy="819" r="2.2"/><path d="M548.4 820.6 L550 822.2"/></g><path d="M1114.5 656 L1118.5 650 L1122.5 656 Z" fill="#6e7f95" stroke="#6e7f95" stroke-width="1" stroke-linejoin="round"/><path d="M1114.5 1054 L1118.5 1060 L1122.5 1054 Z" fill="#6e7f95" stroke="#6e7f95" stroke-width="1" stroke-linejoin="round"/></svg><div class="a" style="left:1127px;top:56px;width:793px;height:1008px;background:#f3f5f9;box-shadow:-2px 0 5px rgba(0,0,0,0.10)"></div>
<div class="a" style="left:1127px;top:56px;width:1px;height:1008px;background:#d6dde6"></div>
<div class="a" style="left:1128px;top:56px;width:792px;height:55px;background:#fff"></div>
<div class="t" style="left:1140.4px;top:75.06px;font-size:18px;color:#1a87c8;">Náhled souboru</div>
<div class="btn" style="left:1283px;top:65px;width:160px;height:38px"></div>
<div class="t" style="left:1296.2px;top:76.90px;font-size:13px;color:#111418;">OBJ č.006.2025.pdf</div>
<div class="a" style="left:1128px;top:111px;width:792px;height:51px;background:#f5f7fa;border:1px solid #d3dbe6;border-left:none"></div>
<div class="a" style="left:1128px;top:162px;width:792px;height:8px;background:linear-gradient(180deg,rgba(0,0,0,0.10),rgba(0,0,0,0))"></div>
<div class="a" style="left:1337.5px;top:118px;width:39px;height:36px;background:#fff;border:1px solid #d8e0ea;border-radius:3px"></div>
<div class="t" style="left:1343.5px;top:130.00px;font-size:13px;color:#111418;">1</div>
<div class="t" style="left:1384.7px;top:130.00px;font-size:13px;color:#111418;">/ 1</div>
<div class="a" style="left:1451px;top:118px;width:1px;height:36px;background:#d3dbe6"></div>
<div class="a" style="left:1608px;top:118px;width:1px;height:36px;background:#d3dbe6"></div>
<div class="a" style="left:1661px;top:118px;width:1px;height:36px;background:#d3dbe6"></div>
<div class="a" style="left:1714px;top:118px;width:1px;height:36px;background:#d3dbe6"></div>
<div class="a" style="left:1500.5px;top:118px;width:59.5px;height:36px;background:#fff;border:1px solid #d8e0ea;border-radius:3px"></div>
<div class="t" style="left:1507px;top:130.00px;font-size:13px;color:#111418;">100%</div>
<div class="a" style="left:1227px;top:174px;width:595px;height:841px;background:#fff;box-shadow:0 3px 12px rgba(0,0,0,0.14)"></div>
<div class="t" style="left:1284.6px;top:187.26px;font-size:16px;color:#163a5f;font-weight:bold">OBJEDNÁVKA</div>
<div class="a" style="left:1246px;top:204px;width:189.5px;height:20.7px;background:#dce8f5"></div>
<div class="t" style="left:1308px;top:206.86px;font-size:16px;color:#1a2f4a;font-weight:bold;font-style:italic">006.2025</div>
<div class="t" style="left:1311.7px;top:228.64px;font-size:12px;color:#1a2f4a;font-weight:bold">Stř. Kopáč</div>
<div class="a" style="left:1245px;top:256.5px;width:554px;height:17.5px;background:#183a5e"></div>
<div class="a" style="left:1245px;top:274px;width:554px;height:129.5px;border:1.6px solid #183a5e;border-top:none;background:#fff"></div>
<div class="a" style="left:1535.5px;top:274px;width:1.6px;height:129px;background:#183a5e"></div>
<div class="t" style="left:1258px;top:260.64px;font-size:12px;color:#fff;font-weight:bold">DODÁVATEĽ:</div>
<div class="t" style="left:1548.5px;top:260.64px;font-size:12px;color:#fff;font-weight:bold">ODBERATEĽ:</div>
<div class="t" style="left:1258px;top:277.14px;font-size:12px;color:#1d2a3a;"><i>Názov/Adresa</i></div>
<div class="t" style="left:1258px;top:292.99px;font-size:12px;color:#1d2a3a;">First Information systtems, s.r.o.</div>
<div class="t" style="left:1258px;top:308.84px;font-size:12px;color:#1d2a3a;">Andreja Kmeťa 16</div>
<div class="t" style="left:1258px;top:324.69px;font-size:12px;color:#1d2a3a;">010 01</div>
<div class="t" style="left:1548.5px;top:277.14px;font-size:12px;color:#1d2a3a;"><i>Názov/Adresa</i></div>
<div class="t" style="left:1548.5px;top:292.99px;font-size:12px;color:#1d2a3a;">Stavebniny DEK a.s.</div>
<div class="t" style="left:1548.5px;top:308.84px;font-size:12px;color:#1d2a3a;">Tiskařská</div>
<div class="t" style="left:1548.5px;top:324.69px;font-size:12px;color:#1d2a3a;">Praha</div>
<div class="t" style="left:1258px;top:358.04px;font-size:12px;color:#1a3150;font-weight:bold">IČO:</div>
<div class="t" style="left:1323.5px;top:358.04px;font-size:12px;color:#1a3150;font-weight:bold">31638937</div>
<div class="t" style="left:1548.5px;top:358.04px;font-size:12px;color:#1a3150;font-weight:bold">IČO:</div>
<div class="t" style="left:1666.6px;top:358.04px;font-size:12px;color:#1a3150;font-weight:bold">03748600</div>
<div class="t" style="left:1258px;top:373.84px;font-size:12px;color:#1a3150;font-weight:bold">DIČ:</div>
<div class="t" style="left:1323.5px;top:373.84px;font-size:12px;color:#1a3150;font-weight:bold">2020450641</div>
<div class="t" style="left:1548.5px;top:373.84px;font-size:12px;color:#1a3150;font-weight:bold">DIČ:</div>
<div class="t" style="left:1666.6px;top:373.84px;font-size:12px;color:#1a3150;font-weight:bold">CZ03748600</div>
<div class="t" style="left:1258px;top:390.44px;font-size:12px;color:#1a3150;font-weight:bold">IČ DPH:</div>
<div class="t" style="left:1323.5px;top:390.44px;font-size:12px;color:#1a3150;font-weight:bold">SK2020450641</div>
<div class="t" style="left:1548.5px;top:390.44px;font-size:12px;color:#1a3150;font-weight:bold">IČ DPH:</div>
<div class="a" style="left:1246.6px;top:403.5px;width:551px;height:128.5px;background:#dce8f5"></div>
<svg style="left:0;top:0" width="1920" height="1064"><rect x="1386" y="403.5" width="0.8" height="128.5" fill="#e2ecf7"/><rect x="1435.5" y="403.5" width="0.8" height="128.5" fill="#e2ecf7"/><rect x="1482" y="403.5" width="0.8" height="128.5" fill="#e2ecf7"/><rect x="1536" y="403.5" width="0.8" height="128.5" fill="#e2ecf7"/><rect x="1654" y="403.5" width="0.8" height="128.5" fill="#e2ecf7"/><rect x="1679" y="403.5" width="0.8" height="128.5" fill="#e2ecf7"/><rect x="1751.5" y="403.5" width="0.8" height="128.5" fill="#e2ecf7"/><rect x="1246.6" y="420" width="551" height="0.8" fill="#e2ecf7"/><rect x="1246.6" y="436" width="551" height="0.8" fill="#e2ecf7"/><rect x="1246.6" y="452" width="551" height="0.8" fill="#e2ecf7"/><rect x="1246.6" y="468" width="551" height="0.8" fill="#e2ecf7"/><rect x="1246.6" y="484" width="551" height="0.8" fill="#e2ecf7"/><rect x="1246.6" y="500" width="551" height="0.8" fill="#e2ecf7"/><rect x="1246.6" y="516" width="551" height="0.8" fill="#e2ecf7"/></svg>
<div class="a" style="left:1245px;top:403.5px;width:1.6px;height:215px;background:#183a5e"></div>
<div class="a" style="left:1797px;top:403.5px;width:1.8px;height:112.5px;background:#183a5e"></div>
<div class="t" style="left:1258px;top:406.34px;font-size:12px;color:#1a3150;font-weight:bold">Dátum vystavenia:</div>
<div class="t" style="left:1448px;top:406.34px;font-size:12px;color:#1d2a3a;font-style:italic">06.11.2025</div>
<div class="t" style="left:1258px;top:422.54px;font-size:12px;color:#1a3150;font-weight:bold">Mena:</div>
<div class="t" style="left:1448px;top:422.54px;font-size:12px;color:#1d2a3a;font-style:italic">CZK</div>
<div class="t" style="left:1258px;top:454.94px;font-size:12px;color:#1a3150;font-weight:bold">Dátum začatia prác:</div>
<div class="t" style="left:1448px;top:454.94px;font-size:12px;color:#1d2a3a;font-style:italic">01.09.2025</div>
<div class="t" style="left:1258px;top:471.54px;font-size:12px;color:#1a3150;font-weight:bold">Dátum ukončenia prác:</div>
<div class="t" style="left:1448px;top:471.54px;font-size:12px;color:#1d2a3a;font-style:italic">01.08.2026</div>
<div class="t" style="left:1549px;top:487.04px;font-size:12px;color:#1a3150;font-weight:bold">Nadradená zmluva</div>
<div class="t" style="left:1549.5px;top:503.54px;font-size:12px;color:#1a3150;font-weight:bold">Splatnost:</div>
<div class="t" style="left:1692px;top:503.54px;font-size:12px;color:#1d2a3a;font-style:italic">30 dní</div>
<div class="t" style="left:1258px;top:519.04px;font-size:12px;color:#1a3150;font-weight:bold">Názov zákazky</div>
<div class="t" style="left:1438.4px;top:519.04px;font-size:12px;color:#1d2a3a;">Stavba rodinného domu</div>
<div class="a" style="left:1245px;top:532px;width:554px;height:1.2px;background:#183a5e"></div>
<div class="a" style="left:1246.6px;top:533px;width:552px;height:15.5px;background:#245d96"></div>
<div class="t" style="left:1258px;top:535.64px;font-size:12px;color:#fff;font-weight:bold">Predmet objednávky:</div>
<div class="a" style="left:1245px;top:548.5px;width:554px;height:70.5px;border:1.6px solid #183a5e;border-top:none"></div>
<div class="t" style="left:1258px;top:561.14px;font-size:12px;color:#1d2a3a;font-style:italic">Objednáváme dodávku materiálu a provedení kompletní fasády rodinného domu dle projektové</div>
<div class="t" style="left:1258px;top:574.54px;font-size:12px;color:#1d2a3a;font-style:italic">dokumentace a cenové nabídky. Součástí zakázky je zateplení obvodových stěn, lepení a kotvení</div>
<div class="t" style="left:1258px;top:587.94px;font-size:12px;color:#1d2a3a;font-style:italic">izolantu, výztužná vrstva s perlinkou, finální omítka a zapravení detailů kolem otvorů.</div>
<div class="a" style="left:1245px;top:618.5px;width:554px;height:16px;background:#245d96;border-top:1px solid #183a5e"></div>
<div class="t" style="left:1257.5px;top:621.74px;font-size:12px;color:#fff;font-weight:bold">Položka</div>
<div class="t" style="left:1692.5px;top:621.74px;font-size:12px;color:#fff;font-weight:bold">Suma bez DPH</div>
<div class="a" style="left:1245px;top:634.5px;width:554px;height:65px;border:1.5px solid #183a5e;border-top:none;border-bottom:none;background:#fff"></div>
<div class="a" style="left:1245px;top:650px;width:554px;height:1px;background:#2d4b6c"></div>
<div class="a" style="left:1245px;top:666.25px;width:554px;height:1px;background:#2d4b6c"></div>
<div class="a" style="left:1245px;top:682.5px;width:554px;height:1px;background:#2d4b6c"></div>
<div class="a" style="left:1245px;top:698.5px;width:554px;height:1px;background:#2d4b6c"></div>
<div class="a" style="left:1679px;top:618.5px;width:1px;height:81px;background:#2d4b6c"></div>
<div class="a" style="left:1751px;top:634.5px;width:1px;height:65px;background:#2d4b6c"></div>
<div class="t" style="left:1257.5px;top:637.34px;font-size:12px;color:#1d2a3a;">Kontaktní zateplovací systém EPS 150 mm</div>
<div class="t" style="left:1342.5px;width:400px;text-align:right;top:637.34px;font-size:12px;color:#1d2a3a;">140 400,00</div>
<div class="t" style="left:1759.7px;top:637.34px;font-size:12px;color:#1d2a3a;">CZK</div>
<div class="t" style="left:1257.5px;top:653.59px;font-size:12px;color:#1d2a3a;">Finální silikonová omítka</div>
<div class="t" style="left:1342.5px;width:400px;text-align:right;top:653.59px;font-size:12px;color:#1d2a3a;">41 400,00</div>
<div class="t" style="left:1759.7px;top:653.59px;font-size:12px;color:#1d2a3a;">CZK</div>
<div class="t" style="left:1257.5px;top:669.84px;font-size:12px;color:#1d2a3a;">Soklová část – XPS izolace 100 mm</div>
<div class="t" style="left:1342.5px;width:400px;text-align:right;top:669.84px;font-size:12px;color:#1d2a3a;">8 750,00</div>
<div class="t" style="left:1759.7px;top:669.84px;font-size:12px;color:#1d2a3a;">CZK</div>
<div class="t" style="left:1257.5px;top:686.09px;font-size:12px;color:#1d2a3a;">Fasádní lišty, rohy, parapety</div>
<div class="t" style="left:1342.5px;width:400px;text-align:right;top:686.09px;font-size:12px;color:#1d2a3a;">8 000,00</div>
<div class="t" style="left:1759.7px;top:686.09px;font-size:12px;color:#1d2a3a;">CZK</div>
<div class="a" style="left:1536px;top:699px;width:263px;height:20px;background:#183a5e"></div>
<div class="a" style="left:1679px;top:699px;width:1px;height:20px;background:#2d4d72"></div>
<div class="a" style="left:1751px;top:699px;width:1px;height:20px;background:#2d4d72"></div>
<div class="t" style="left:1548.75px;top:705.44px;font-size:12px;color:#fff;font-weight:bold">Celková Suma</div>
<div class="t" style="left:1342.5px;width:400px;text-align:right;top:705.44px;font-size:12px;color:#fff;font-weight:bold">198 550,00</div>
<div class="t" style="left:1758.75px;top:705.44px;font-size:12px;color:#fff;font-weight:bold">CZK</div>
<div class="a" style="left:1310.6px;top:764px;width:172px;height:16.3px;background:#dce8f5"></div>
<div class="a" style="left:1654px;top:764px;width:144px;height:16.3px;background:#dce8f5"></div>
<div class="t" style="left:906px;width:400px;text-align:right;top:768.99px;font-size:11px;color:#1a3150;font-weight:bold">Dodávateľ:</div>
<div class="t" style="left:1323px;top:768.99px;font-size:11px;color:#1d2a3a;">Stavebniny DEK a.s.</div>
<div class="t" style="left:909px;width:400px;text-align:right;top:784.59px;font-size:11px;color:#1d2a3a;font-style:italic">Meno:</div>
<div class="t" style="left:1323px;top:784.59px;font-size:11px;color:#1d2a3a;">Igor Vlasák</div>
<div class="t" style="left:909px;width:400px;text-align:right;top:800.89px;font-size:11px;color:#1d2a3a;font-style:italic">Pozícia:</div>
<div class="t" style="left:1323px;top:800.89px;font-size:11px;color:#1d2a3a;">Prodejce</div>
<div class="t" style="left:1252.5px;width:400px;text-align:right;top:768.99px;font-size:11px;color:#1a3150;font-weight:bold">Odberateľ:</div>
<div class="t" style="left:1666.6px;top:768.99px;font-size:11px;color:#1d2a3a;">First information systems, s.r.o.</div>
<div class="t" style="left:1252px;width:400px;text-align:right;top:784.59px;font-size:11px;color:#1d2a3a;font-style:italic">Meno:</div>
<div class="t" style="left:1666.6px;top:784.59px;font-size:11px;color:#1d2a3a;">Kalisch Boris</div>
<div class="t" style="left:1252px;width:400px;text-align:right;top:800.89px;font-size:11px;color:#1d2a3a;font-style:italic">Pozícia:</div>
<div class="t" style="left:1666.6px;top:800.89px;font-size:11px;color:#1d2a3a;">Konateľ</div>
<div class="t" style="left:1140.6px;width:400px;text-align:center;top:928.93px;font-size:10px;color:#1d2a3a;">Zodpovedná osoba</div>
<div class="a" style="left:1245.5px;top:938.6px;width:190.3px;height:14.6px;background:#dce8f5"></div>
<div class="t" style="left:1140.65px;width:400px;text-align:center;top:942.74px;font-size:10px;color:#1d2a3a;">Kunčar Martin</div>
<div class="t" style="left:1368.5px;width:400px;text-align:center;top:928.93px;font-size:10px;color:#1d2a3a;">email:</div>
<div class="a" style="left:1482.5px;top:938.6px;width:172.1px;height:14.6px;background:#dce8f5"></div>
<div class="t" style="left:1368.55px;width:400px;text-align:center;top:942.74px;font-size:10px;color:#1d2a3a;">kuncar@firstis.eu</div>
<div class="t" style="left:1539.3px;width:400px;text-align:center;top:928.93px;font-size:10px;color:#1d2a3a;">tel. č.:</div>
<div class="a" style="left:1680px;top:938.6px;width:118.6px;height:14.6px;background:#dce8f5"></div>
<div class="t" style="left:1539.3px;width:400px;text-align:center;top:942.74px;font-size:10px;color:#1d2a3a;">+420778745089</div>
<svg style="left:0;top:0" width="1920" height="1064"><path d="M1420.5 82.5 L1426 88 L1431.5 82.5" class="ic" stroke-width="1.2"/><path d="M1888.5 79 L1899 89.5 M1899 79 L1888.5 89.5" class="ic" stroke-width="1.5"/><path d="M1318 130.5 L1311.5 137 L1318 143.5" class="ic" stroke-width="1.4"/><path d="M1423.5 130.5 L1430 137 L1423.5 143.5" class="ic" stroke-width="1.4"/><path d="M1471 137 H1485" class="ic" stroke-width="1.4"/><path d="M1575 137 H1589 M1582 130 V144" class="ic" stroke-width="1.4"/><g class="ic" stroke-width="1.3"><path d="M1628.5 136 Q1629.3 130.2 1635.3 130.2 Q1639.6 130.2 1641.3 133.6"/><path d="M1637.6 133.8 H1641.6 V129.6"/><path d="M1641.8 138 Q1641 143.8 1635 143.8 Q1630.7 143.8 1629 140.4"/><path d="M1632.7 140.2 H1628.7 V144.4"/></g><g class="ic" stroke-width="1.3"><path d="M1688 129.3 V140 M1684.2 136.2 L1688 140 L1691.8 136.2"/><rect x="1680.4" y="139.4" width="15.4" height="5.8" rx="1.2"/><circle cx="1692.6" cy="142.3" r="0.55" fill="#1589c9"/></g><g class="ic" stroke-width="1.3"><path d="M1735.6 134.6 V131.1 Q1735.6 129.6 1737.1 129.6 H1744.9 Q1746.4 129.6 1746.4 131.1 V134.6"/><rect x="1733" y="135" width="16" height="6.6" rx="1.3"/><rect x="1735.6" y="139.4" width="10.8" height="5.6" rx="0.8" fill="#f5f7fa"/><circle cx="1746.3" cy="137.2" r="0.5" fill="#1589c9"/></g><line x1="1310" y1="796.5" x2="1483" y2="796.5" stroke="#111" stroke-width="1" stroke-dasharray="1 1"/><line x1="1310" y1="812.5" x2="1483" y2="812.5" stroke="#111" stroke-width="1" stroke-dasharray="1 1"/><line x1="1654" y1="780.5" x2="1798" y2="780.5" stroke="#111" stroke-width="1" stroke-dasharray="1 1"/><line x1="1245" y1="953.5" x2="1435" y2="953.5" stroke="#111" stroke-width="1" stroke-dasharray="1 1"/><line x1="1482" y1="953.5" x2="1654" y2="953.5" stroke="#111" stroke-width="1" stroke-dasharray="1 1"/><line x1="1680" y1="953.5" x2="1798" y2="953.5" stroke="#111" stroke-width="1" stroke-dasharray="1 1"/></svg><div class="a" style="left:256px;top:57px;width:7px;height:1007px;background:linear-gradient(90deg,rgba(0,0,0,0.22),rgba(0,0,0,0.08) 40%,rgba(0,0,0,0))"></div><div class="a" style="left:0;top:56px;width:256px;height:1px;background:#1c2536"></div><div class="a" style="left:256px;top:56px;width:1664px;height:1px;background:#0b1524"></div>
</body></html>
